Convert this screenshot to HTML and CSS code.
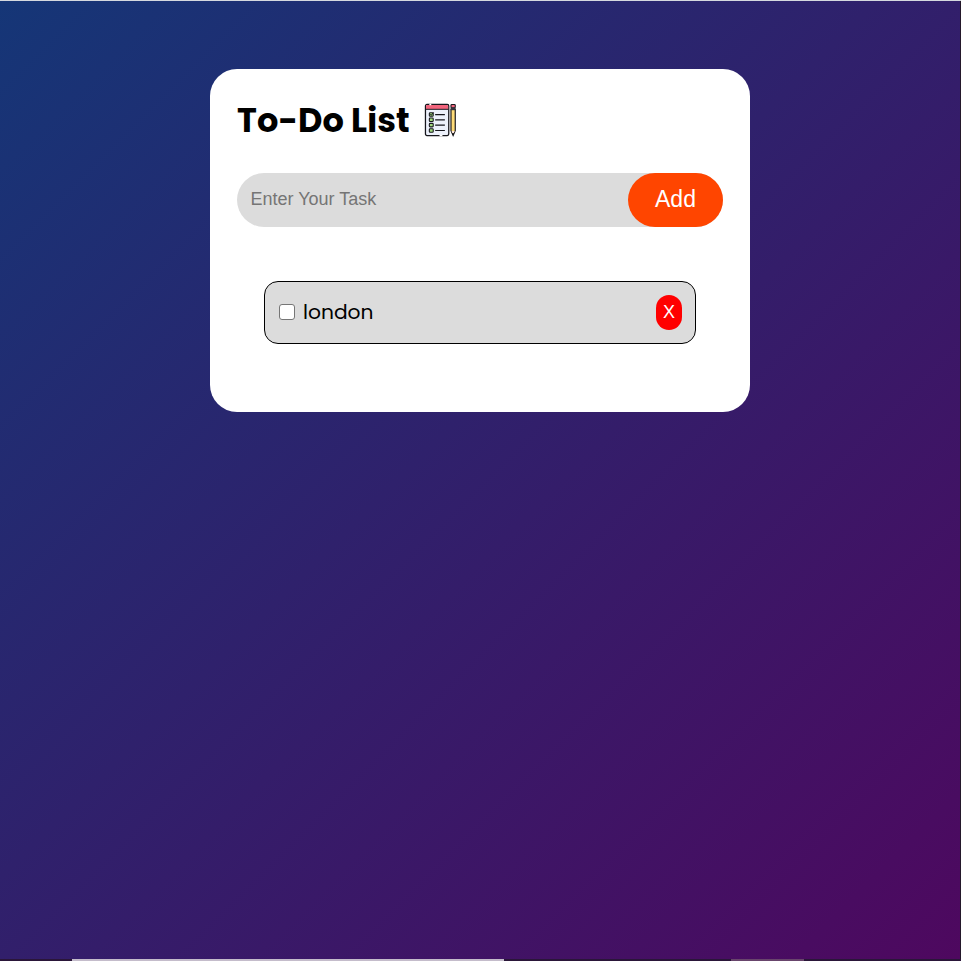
FILE: index.html
```html
<!DOCTYPE html>
<html lang="en">
<head>
<meta charset="utf-8">
<title>To-Do List</title>
<link rel="stylesheet" href="styles.css">
</head>
<body>
<div class="top-edge"></div>
<main class="container">
  <section class="todo-app">
    <h1 class="title"><span class="title-text">To-Do List</span>
      <svg class="icon" viewBox="0 0 34 34" aria-hidden="true">
        <rect x="1.5" y="1" width="24" height="32" rx="1.5" fill="#edf1fb" stroke="#16161c" stroke-width="1.3"/>
        <path d="M2.1 5.8V2.5q0-.9.9-.9h21q.9 0 .9.9v3.3z" fill="#f2647c"/>
        <path d="M2 6h23" stroke="#16161c"/>
        <path d="M5.5 1h2M16 33h3" stroke="#fff" stroke-width="1.5"/>
        <g fill="#a2db80" stroke="#16161c" stroke-width="1.1">
          <rect x="5.5" y="9.5" width="4" height="3.6" rx=".8"/>
          <rect x="5.5" y="15" width="4" height="3.6" rx=".8"/>
          <rect x="5.5" y="20.5" width="4" height="3.6" rx=".8"/>
          <rect x="5.5" y="26" width="4" height="3.6" rx=".8"/>
        </g>
        <path d="M6.2 11l1.2 1.2 2.4-3" fill="none" stroke="#16161c"/>
        <path d="M11.5 11.4h10M11.5 16.8h10M11.5 22.3h10M11.5 27.8h10" stroke="#16161c" stroke-width="1.2"/>
        <path d="M27.8 6h4.4v22l-2.2 5-2.2-5z" fill="#ffdc78" stroke="#16161c" stroke-width="1.2"/>
        <rect x="27.8" y="1" width="4.4" height="3.5" rx=".8" fill="#f2647c" stroke="#16161c" stroke-width="1.1"/>
        <path d="M27.5 4.3h5v2.6h-5z" fill="#34343c"/>
        <path d="M28.4 28.3h3.2l-.8 2h-1.6z" fill="#ffe9e0"/>
        <path d="M29 30.6h2l-1 2.4z" fill="#16161c"/>
      </svg>
    </h1>
    <div class="row">
      <input class="task-input" type="text" placeholder="Enter Your Task">
      <button class="add">Add</button>
    </div>
    <ul class="list">
      <li class="task">
        <label class="task-label"><input class="check" type="checkbox"><span class="task-name">london</span></label>
        <button class="remove">X</button>
      </li>
    </ul>
  </section>
</main>
<div class="side-edge"></div>
<footer class="bottom-edge"><span class="strip"></span><span class="strip dim"></span></footer>
</body>
</html>
```
FILE: styles.css
```css
* {
  box-sizing: border-box;
  margin: 0;
  padding: 0;
}

body {
  display: grid;
  grid-template: 1px 1fr 2px / 1fr 1px;
  height: 100vh;
  overflow: hidden;
  font-family: Poppins, Inter, sans-serif;
}

.top-edge {
  grid-column: 1 / -1;
  background: #d5d9df;
}

.container {
  padding-top: 68px;
  background: linear-gradient(135deg, #153677, #4e085f);
}

.side-edge {
  background: #24182b;
}

.bottom-edge {
  grid-column: 1 / -1;
  display: grid;
  grid-template-columns: 432px 73px;
  column-gap: 227px;
  padding-left: 72px;
  background: #2a1639;
}

.strip {
  background: #c4bccb;
}

.dim {
  background: #68456c;
}

.todo-app {
  width: 540px;
  height: 343px;
  margin: 0 auto;
  padding: 34px 27px 0;
  border-radius: 27px;
  background: #fff;
}

.title {
  display: flex;
  align-items: flex-start;
  height: 35px;
  font-size: 33.6px;
  line-height: 34px;
  font-weight: 700;
}

.title-text {
  width: 187px;
  padding-top: 1px;
  letter-spacing: 0.08px;
  white-space: nowrap;
}

.icon {
  width: 33px;
  height: 34px;
}

.row {
  display: flex;
  height: 54px;
  margin-top: 35px;
  border-radius: 27px;
  background: #dcdcdc;
}

.task-input {
  flex: 1;
  min-width: 0;
  padding: 0 13.5px 2px;
  border: 0;
  outline: 0;
  background: transparent;
  font: 18px "Liberation Sans", Arial, sans-serif;
}

.task-input::placeholder {
  color: #757575;
}

.add {
  width: 95px;
  padding-bottom: 2px;
  border: 0;
  border-radius: 27px;
  background: #ff4500;
  color: #fff;
  font: 23px "Liberation Sans", Arial, sans-serif;
}

.list {
  padding: 54px 27px 0;
  list-style: none;
}

.task {
  display: flex;
  align-items: center;
  justify-content: space-between;
  height: 63px;
  padding: 0 13px 0 14px;
  border: 1px solid #000;
  border-radius: 14px;
  background: #dcdcdc;
}

.task-label {
  display: flex;
  align-items: center;
  padding-bottom: 2px;
}

.check {
  appearance: none;
  width: 16px;
  height: 16px;
  border: 1px solid #767676;
  border-radius: 3px;
  background: #fff;
}

.task-name {
  margin-left: 8px;
  font-size: 20.25px;
  line-height: 30px;
}

.remove {
  width: 26px;
  height: 35px;
  padding-bottom: 1px;
  border: 0;
  border-radius: 13px;
  background: #f00;
  color: #fff;
  font: 18px "Liberation Sans", Arial, sans-serif;
}
```
